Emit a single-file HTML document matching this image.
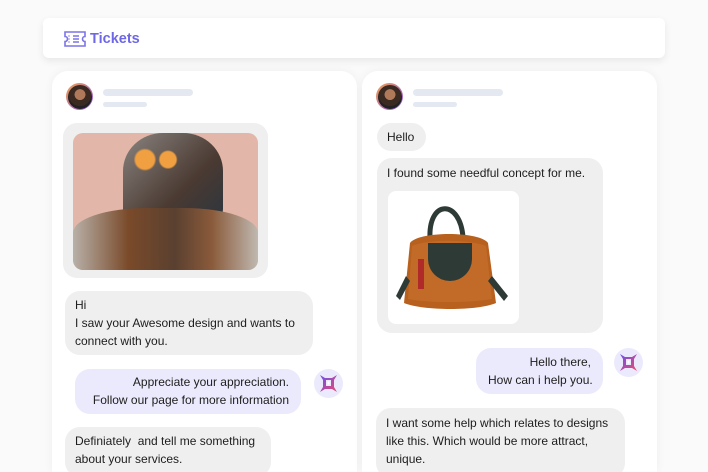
<!DOCTYPE html>
<html style="width:708px;height:472px;overflow:hidden"><head><meta charset="utf-8"><style>
*{margin:0;padding:0;box-sizing:border-box}
body{width:708px;height:472px;background:#fafafa;font-family:"Liberation Sans",sans-serif;position:relative;overflow:hidden;color:#1d1d1d}
.a{position:absolute}
.hdr{left:43px;top:18px;width:622px;height:40px;background:#fff;border-radius:6px;box-shadow:0 3px 8px rgba(0,0,0,.08)}
.card{background:#fff;border-radius:16px 16px 0 0;box-shadow:0 0 10px rgba(0,0,0,.05)}
.b{background:#efefef;border-radius:15px;font-size:12px;line-height:18px;padding:0 10px;white-space:nowrap}
.p{background:#ebeafc;border-radius:15px;font-size:12px;line-height:18px;text-align:right;padding:0 12px;white-space:nowrap}
.sk{background:#e4e9f1;border-radius:4px}
.av{width:27px;height:27px;border-radius:50%;background:linear-gradient(135deg,#f3a14a,#8a4ff0);padding:1.5px}
.av div{width:100%;height:100%;border-radius:50%;background:radial-gradient(circle at 50% 40%,#b07a5a 0 28%,#3a2a22 30% 60%,#222 62%)}
.bot{width:29px;height:29px;border-radius:50%;background:#ebeafc}
</style></head><body>
<div class="a hdr">
<svg class="a" style="left:21px;top:13px" width="22" height="16" viewBox="0 0 22 16" fill="none" stroke="#7b74e8" stroke-width="1.6"><path d="M1 1h20v4.5a2.5 2.5 0 0 0 0 5V15H1v-4.5a2.5 2.5 0 0 0 0-5z"/><path d="M5 4.5v1M5 7.5v1M5 10.5v1M9 5h6M9 8h6M9 11h6"/></svg>
<div class="a" style="left:47px;top:13px;font-size:14.5px;font-weight:bold;color:#6f68e6">Tickets</div>
</div>

<div class="a card" style="left:52px;top:71px;width:305px;height:401px"></div>
<div class="a card" style="left:362px;top:71px;width:295px;height:401px"></div>

<svg width="0" height="0" style="position:absolute"><defs><linearGradient id="g" x1="0" y1="0" x2="1" y2="1"><stop offset="0" stop-color="#6a4ff0"/><stop offset="1" stop-color="#f04a6a"/></linearGradient></defs></svg>

<!-- left -->
<div class="a av" style="left:66px;top:83px"><div></div></div>
<div class="a sk" style="left:103px;top:89px;width:90px;height:7px"></div>
<div class="a sk" style="left:103px;top:102px;width:44px;height:5px"></div>
<div class="a" style="left:63px;top:123px;width:205px;height:155px;background:#efefef;border-radius:14px"></div>
<div class="a" style="left:73px;top:133px;width:185px;height:137px;border-radius:10px;overflow:hidden;background:#e2b6a8">
 <div class="a" style="left:50px;top:0;width:100px;height:95px;border-radius:40% 40% 20% 20%;background:radial-gradient(circle at 22% 28%,#f0a040 0 9%,transparent 11%),radial-gradient(circle at 45% 28%,#f0a040 0 9%,transparent 11%),linear-gradient(135deg,#8a8480,#4a3a32 60%,#2a3540)"></div>
 <div class="a" style="left:0;top:75px;width:185px;height:62px;border-radius:40% 40% 0 0;background:linear-gradient(90deg,#b8b0a8,#7a4a2a 30%,#5a4030 55%,#8a5a3a 75%,#c0b8b0)"></div>
</div>
<div class="a b" style="left:65px;top:291px;width:248px;height:64px;padding-top:5px">Hi<br>I saw your Awesome design and wants to<br>connect with you.</div>
<div class="a p" style="left:75px;top:369px;width:226px;height:45px;padding-top:4px">Appreciate your appreciation.<br>Follow our page for more information</div>
<div class="a bot" style="left:314px;top:369px"><svg width="29" height="29" viewBox="0 0 29 29"><path d="M6 6l5 3h7l5-3-3 5v7l3 5-5-3h-7l-5 3 3-5v-7z" fill="url(#g)"/><rect x="12" y="11" width="5" height="6" fill="#ebeafc"/><rect x="13.5" y="12.5" width="2" height="3" fill="#fff"/></svg></div>
<div class="a b" style="left:65px;top:427px;width:206px;height:50px;padding-top:5px">Definiately&nbsp; and tell me something<br>about your services.</div>

<!-- right -->
<div class="a av" style="left:376px;top:83px"><div></div></div>
<div class="a sk" style="left:413px;top:89px;width:90px;height:7px"></div>
<div class="a sk" style="left:413px;top:102px;width:44px;height:5px"></div>
<div class="a b" style="left:377px;top:123px;width:49px;height:28px;padding-top:5px">Hello</div>
<div class="a b" style="left:377px;top:158px;width:226px;height:175px;padding-top:6px">I found some needful concept for me.</div>
<div class="a" style="left:388px;top:191px;width:131px;height:133px;background:#fff;border-radius:8px">
<svg width="131" height="133" viewBox="0 0 131 133"><path d="M42 48 C40 8 72 8 75 46" fill="none" stroke="#2e3a36" stroke-width="5"/><path d="M22 52 C30 40 92 40 100 52 L108 112 C90 120 35 120 16 112 Z" fill="#b8611f"/><path d="M24 55 C40 48 80 48 98 55 L104 108 C80 112 40 112 20 108Z" fill="#c66f2c" opacity=".7"/><path d="M40 52 H84 V68 A22 22 0 0 1 40 68Z" fill="#2e3a36"/><path d="M18 85 L8 105 L12 109 L22 90" fill="#2e3a36"/><path d="M104 85 L120 105 L116 110 L100 90" fill="#2e3a36"/><rect x="30" y="68" width="6" height="30" fill="#b02a2a"/></svg>
</div>
<div class="a p" style="left:476px;top:348px;width:127px;height:46px;padding-top:5px">Hello there,<br>How can i help you.</div>
<div class="a bot" style="left:614px;top:348px"><svg width="29" height="29" viewBox="0 0 29 29"><path d="M6 6l5 3h7l5-3-3 5v7l3 5-5-3h-7l-5 3 3-5v-7z" fill="url(#g)"/><rect x="12" y="11" width="5" height="6" fill="#ebeafc"/><rect x="13.5" y="12.5" width="2" height="3" fill="#fff"/></svg></div>
<div class="a b" style="left:376px;top:408px;width:249px;height:70px;padding-top:6px">I want some help which relates to designs<br>like this. Which would be more attract,<br>unique.</div>
</body></html>
